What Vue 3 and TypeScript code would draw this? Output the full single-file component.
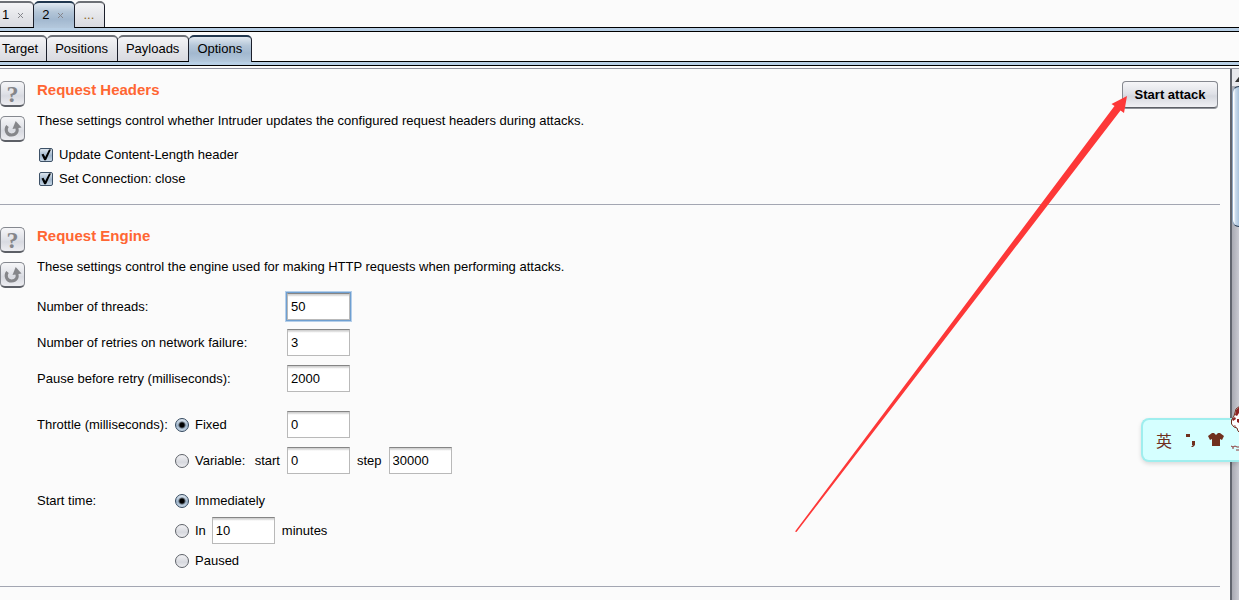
<script setup lang="ts">
import { ref } from 'vue'

interface Tab { label: string; closable?: boolean; more?: boolean }

const attackTabs: Tab[] = [
  { label: '1', closable: true },
  { label: '2', closable: true },
  { label: '...', more: true },
]
const pageTabs: Tab[] = [
  { label: 'Target' },
  { label: 'Positions' },
  { label: 'Payloads' },
  { label: 'Options' },
]
const activeAttack = ref('2')
const activePage = ref('Options')

const updateLength = ref(true)
const closeConnection = ref(true)

const threads = ref('50')
const retries = ref('3')
const pause = ref('2000')
const throttle = ref<'fixed' | 'variable'>('fixed')
const fixedDelay = ref('0')
const variableStart = ref('0')
const variableStep = ref('30000')
const startTime = ref<'now' | 'delayed' | 'paused'>('now')
const delayMinutes = ref('10')
</script>

<template>
  <div class="window">
    <nav class="tabs">
      <button
        v-for="t in attackTabs"
        :key="t.label"
        type="button"
        class="tab attack"
        :class="{ active: t.label === activeAttack, more: t.more }"
        @click="activeAttack = t.label"
      >
        <span>{{ t.label }}</span>
        <svg v-if="t.closable" class="close" viewBox="0 0 7 7" aria-hidden="true"><path d="M1 1l5 5M6 1l-5 5" /></svg>
      </button>
    </nav>
    <div class="strip"></div>
    <nav class="tabs pages">
      <button
        v-for="t in pageTabs"
        :key="t.label"
        type="button"
        class="tab page"
        :class="{ active: t.label === activePage }"
        @click="activePage = t.label"
      >{{ t.label }}</button>
    </nav>
    <div class="strip"></div>

    <div class="viewport">
      <main class="content">
        <section class="section first">
          <div class="tools">
            <button type="button" class="tool help" aria-label="Help">?</button>
            <button type="button" class="tool" aria-label="Restore defaults"><svg viewBox="0 0 23 23"><path class="arc" d="M6.500 9C3.500 13 6 18 10.500 18C15 18 17.500 14.500 15.500 10" /><path d="M14.700 4L20.500 10.500L11.500 12Z" /></svg></button>
          </div>
          <div class="body">
            <h2>Request Headers</h2>
            <p>These settings control whether Intruder updates the configured request headers during attacks.</p>
            <label class="check"><input v-model="updateLength" type="checkbox">Update Content-Length header</label>
            <label class="check"><input v-model="closeConnection" type="checkbox">Set Connection: close</label>
          </div>
          <button type="button" class="start">Start attack</button>
        </section>

        <section class="section">
          <div class="tools">
            <button type="button" class="tool help" aria-label="Help">?</button>
            <button type="button" class="tool" aria-label="Restore defaults"><svg viewBox="0 0 23 23"><path class="arc" d="M6.500 9C3.500 13 6 18 10.500 18C15 18 17.500 14.500 15.500 10" /><path d="M14.700 4L20.500 10.500L11.500 12Z" /></svg></button>
          </div>
          <div class="body">
            <h2>Request Engine</h2>
            <p>These settings control the engine used for making HTTP requests when performing attacks.</p>
            <div class="group">
              <div class="row"><label class="wide" for="threads">Number of threads:</label><input id="threads" v-model="threads" class="field focused" type="text"></div>
              <div class="row"><label class="wide" for="retries">Number of retries on network failure:</label><input id="retries" v-model="retries" class="field" type="text"></div>
              <div class="row"><label class="wide" for="pause">Pause before retry (milliseconds):</label><input id="pause" v-model="pause" class="field" type="text"></div>
            </div>
            <div class="group">
              <div class="row">
                <span class="name">Throttle (milliseconds):</span>
                <div class="choice"><label class="radio"><input v-model="throttle" type="radio" name="throttle" value="fixed">Fixed</label></div>
                <input v-model="fixedDelay" class="field" type="text" aria-label="Fixed delay">
              </div>
              <div class="row">
                <span class="name"></span>
                <div class="choice"><label class="radio"><input v-model="throttle" type="radio" name="throttle" value="variable">Variable:</label><label for="vstart">start</label></div>
                <input id="vstart" v-model="variableStart" class="field" type="text">
                <label class="after" for="vstep">step</label>
                <input id="vstep" v-model="variableStep" class="field" type="text">
              </div>
            </div>
            <div class="group times">
              <div class="row">
                <span class="name">Start time:</span>
                <label class="radio"><input v-model="startTime" type="radio" name="time" value="now">Immediately</label>
              </div>
              <div class="row">
                <span class="name"></span>
                <label class="radio in"><input v-model="startTime" type="radio" name="time" value="delayed">In</label>
                <input id="minutes" v-model="delayMinutes" class="field" type="text">
                <label class="after" for="minutes">minutes</label>
              </div>
              <div class="row">
                <span class="name"></span>
                <label class="radio"><input v-model="startTime" type="radio" name="time" value="paused">Paused</label>
              </div>
            </div>
          </div>
        </section>
      </main>
      <div class="scrollbar">
        <div class="up"><svg viewBox="0 0 12 8"><path d="M6 0l6 8H0z" /></svg></div>
        <div class="thumb"></div>
      </div>
    </div>

    <svg class="arrow" viewBox="0 0 333 437" aria-hidden="true"><path d="M332 0L329 17L325.500 14.500L1.500 436L0 435.500L319.500 10L316.500 8Z" /></svg>

    <div class="ime">
      <span class="lang">英</span>
      <svg class="punct" viewBox="0 0 12 16"><path d="M1 2h4v3H1zM7 9h3v4l-2 2H6l2-2H7z" /></svg>
      <svg class="shirt" viewBox="0 0 16 14"><path d="M4 0h2l2 2 2-2h2l4 3-2 4-2-1v7H4V6L2 7 0 3z" /></svg>
    </div>
    <svg class="mascot" viewBox="0 0 8 50" aria-hidden="true">
      <path class="face" d="M9 2L5 5L3 12L.500 16V20L3 23L6 24L7 27L9 29Z" />
      <path class="ear" d="M8 3L5 6L4 11L6 12L8 9ZM1 15l3-2 1 2-3 2zM6 15h2v4l-2-1zM3 21l2 1-1 1z" />
      <path class="mark" d="M0 42l2 1 2-1M2 43v2M4 42l2 1h2M5 46h3" />
    </svg>
  </div>
</template>

<style>
body { margin: 0; background: #fbfbfb; }
</style>

<style scoped>
* { box-sizing: border-box; }
.window {
  position: relative;
  display: flex;
  flex-direction: column;
  height: 100vh;
  overflow: hidden;
  background: #fbfbfb;
  color: #000;
  font: 13px/16px "Liberation Sans", Arial, sans-serif;
}
button, input { font: inherit; color: inherit; margin: 0; }
.tabs { display: flex; padding-top: 1px; }
.tabs.pages { padding-top: 3px; }
.tab {
  display: flex;
  align-items: center;
  height: 26px;
  padding: 0 7px;
  border: 1px solid #1b1f2b;
  border-top: 2px solid #6d7076;
  border-bottom: 0;
  border-left: 0;
  border-radius: 5px 5px 0 0;
  background: linear-gradient(#f4f4f6, #e5e6ea 50%, #d9dae0);
  white-space: nowrap;
}
.tab:first-child { border-top-left-radius: 0; }
.tab.page { padding: 0 9px 0 8px; }
.tab.page:first-child { padding: 0 8px 0 2px; }
.tab.attack { gap: 8px; padding: 0 10px 0 8px; }
.tab.attack:first-child { padding: 0 9px 0 2px; }
.tab.more { color: #8a6420; }
.tab.active {
  margin-bottom: -1px;
  height: 27px;
  padding-bottom: 1px;
  border-top-color: #22384f;
  background: linear-gradient(#e1e9f1, #b4c6d8 35%, #a2b8cf 65%, #b4c8dc);
  position: relative;
}
.close { width: 7px; height: 7px; fill: none; stroke: #85858b; }
.strip {
  flex: none;
  height: 5px;
  border: 1px solid #000;
  border-width: 1px 0;
  background: #b8cfe5;
}
.viewport {
  flex: 1;
  min-height: 0;
  display: flex;
  margin-top: 2px;
  border-top: 1px solid #8f919f;
}
.content { flex: 1; min-width: 0; padding-right: 10px; overflow: hidden; }
.section {
  display: flex;
  padding: 22px 2px 12px 0;
  border-bottom: 1px solid #a3a6b2;
}
.section.first { padding-top: 12px; padding-bottom: 9px; }
.tools { display: flex; flex-direction: column; gap: 9px; width: 37px; }
.tool {
  width: 25px;
  height: 26px;
  padding: 0;
  border: 1px solid #85888f;
  border-bottom: 2px solid #5c5f66;
  border-radius: 5px;
  background: linear-gradient(#f6f6f8, #dfe1e7 50%, #d8dae1 60%, #ededf1);
}
.tool.help { font: bold 24px/22px "Liberation Serif", serif; color: #85868a; }
.tool svg { display: block; width: 23px; height: 23px; fill: #85868a; }
.tool .arc { fill: none; stroke: #85868a; stroke-width: 3; }
.body { flex: 1; min-width: 0; }
h2 { margin: 0; font-size: 15px; line-height: 18px; color: #ff6633; }
p { margin: 14px 0 18px; }
.check { display: flex; align-items: center; gap: 6px; padding-left: 2px; margin-bottom: 8px; }
.check input, .radio input {
  appearance: none;
  flex: none;
  width: 14px;
  height: 14px;
}
.check input {
  display: grid;
  place-items: center;
  border: 1px solid #3d5167;
  border-radius: 2px;
  background: linear-gradient(#dce5ee, #9fb5cb 55%, #c6d6e5);
}
.check input:checked::after {
  content: "";
  width: 10px;
  height: 12px;
  background: #000;
  clip-path: polygon(5% 45%, 25% 40%, 42% 66%, 80% 4%, 100% 4%, 50% 94%, 32% 94%);
}
.start {
  align-self: flex-start;
  width: 96px;
  height: 27px;
  padding: 0;
  border: 1px solid #85888f;
  border-bottom-color: #5c5f66;
  border-radius: 4px;
  background: linear-gradient(#f6f6f8, #dfe1e7 48%, #d5d8df 56%, #f0f0f4);
  box-shadow: 0 1px 0 #90939a;
  font-weight: bold;
}
.group { display: flex; flex-direction: column; gap: 9px; margin-bottom: 19px; }
.group.times { gap: 3px; margin: -6px 0 0; }
.row { display: flex; align-items: center; min-height: 27px; white-space: nowrap; }
.wide { width: 250px; }
.name { width: 138px; }
.choice { display: flex; justify-content: space-between; width: 112px; padding-right: 7px; }
.radio { display: flex; align-items: center; gap: 6px; }
.radio.in { padding-right: 6px; }
.radio input {
  border: 1px solid #5e6269;
  border-radius: 50%;
  background: linear-gradient(#f2f2f4, #d7d9df 60%, #ededf0);
}
.radio input:checked {
  border-color: #33485e;
  background: radial-gradient(circle, #000 0 2px, #0000 4px), linear-gradient(#dce5ee, #9fb5cb 55%, #c6d6e5);
}
.after { padding: 0 7px; }
.field {
  width: 63px;
  height: 27px;
  padding: 0 3px;
  border: 1px solid #b9b9b9;
  border-top: 1px solid #858585;
  border-radius: 0;
  background: linear-gradient(#d2d2d2 0 1px, #f0f0f0 2px, #fff 3px);
  outline: 0;
}
.focused { box-shadow: 0 0 0 1px #6f9fd0, 0 0 0 2px #b5cfea; }
.scrollbar {
  width: 9px;
  overflow: hidden;
  border-left: 2px solid #62666e;
  background: linear-gradient(90deg, #a9aab2, #c9cad1);
}
.up { display: grid; place-items: center; width: 17px; height: 17px; background: #e8e9ed; }
.up svg { width: 12px; height: 8px; fill: #333; }
.thumb {
  width: 16px;
  height: 141px;
  border: 1px solid #263b52;
  border-left-color: #91a9c1;
  border-radius: 7px;
  background: linear-gradient(90deg, #fff 0 1px, #cfdfee 2px, #a9c3dc 6px);
}
.arrow { position: absolute; left: 795px; top: 96px; width: 333px; height: 437px; fill: #fd3838; }
.ime {
  position: absolute;
  right: 0;
  top: 418px;
  display: flex;
  align-items: center;
  width: 98px;
  height: 44px;
  padding-left: 13px;
  border: 2px solid #9feeee;
  border-right: 0;
  border-radius: 8px 0 0 8px;
  background: #d5ffff;
  box-shadow: 0 2px 4px #0002;
  color: #70301e;
}
.lang { width: 29px; font: 16px/20px "Noto Sans CJK SC", sans-serif; }
.punct { width: 12px; height: 16px; fill: #70301e; }
.shirt { width: 16px; height: 14px; margin-left: 11px; fill: #70301e; }
.mascot { position: absolute; right: 0; top: 404px; width: 8px; height: 50px; }
.face { fill: #fff; stroke: #70301e; }
.ear { fill: #8d2424; }
.mark { fill: none; stroke: #8b3636; }
</style>
